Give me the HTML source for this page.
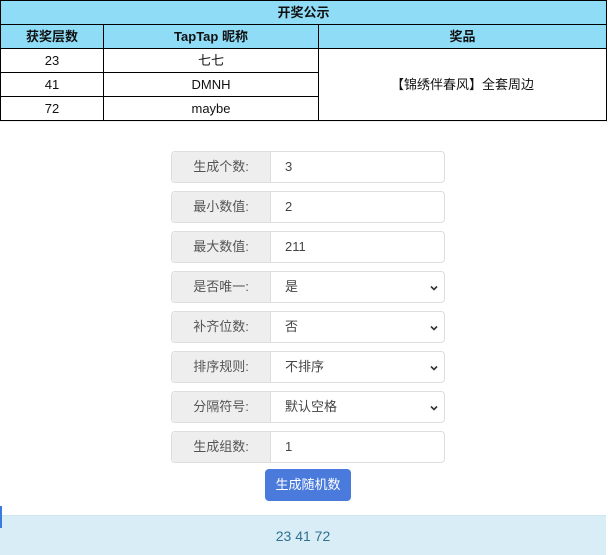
<!DOCTYPE html>
<html><head><meta charset="utf-8"><style>
*{box-sizing:border-box;margin:0;padding:0}
body{width:608px;height:555px;background:#fff;font-family:"Liberation Sans","Noto Sans CJK SC",sans-serif;position:relative;overflow:hidden}
table{position:absolute;left:0;top:0;width:607px;border-collapse:collapse;font-size:13px;color:#111}
td,th{border:1px solid #000;text-align:center;height:24px;padding:0;line-height:1}
th{background:#8fdcf7;font-weight:bold}
.g{position:absolute;left:171px;width:274px;height:32px;border:1px solid #ddd;border-radius:4px;display:flex;font-size:13px;color:#555;line-height:1}
.g .l{width:99px;background:#eee;border-right:1px solid #ddd;display:flex;align-items:center;justify-content:center;border-radius:4px 0 0 4px;padding-bottom:2px}
.g .v{flex:1;display:flex;align-items:center;padding-left:14px;position:relative;color:#444;padding-bottom:2px}
.ar{position:absolute;right:6px;top:12px;width:8px;height:8px}
.btn{position:absolute;left:265px;top:469px;width:86px;height:32px;background:#4a7bdc;border-radius:4px;color:#fff;font-size:13px;display:flex;align-items:center;justify-content:center;line-height:1;padding-bottom:2px}
.res{position:absolute;left:0;top:515px;width:606px;height:40px;background:#d9edf7;color:#31708f;font-size:14px;display:flex;align-items:center;justify-content:center;border-top:1px solid #cfe6f2}
</style></head><body>
<table>
<tr><th colspan="3">开奖公示</th></tr>
<tr><th style="width:103px">获奖层数</th><th style="width:215px">TapTap 昵称</th><th>奖品</th></tr>
<tr><td>23</td><td>七七</td><td rowspan="3">【锦绣伴春风】全套周边</td></tr>
<tr><td>41</td><td>DMNH</td></tr>
<tr><td>72</td><td>maybe</td></tr>
</table>
<div style="position:absolute;left:0;top:121px;width:608px;height:1px;background:#eee"></div>
<div class="g" style="top:151px"><div class="l">生成个数:</div><div class="v">3</div></div>
<div class="g" style="top:191px"><div class="l">最小数值:</div><div class="v">2</div></div>
<div class="g" style="top:231px"><div class="l">最大数值:</div><div class="v">211</div></div>
<div class="g" style="top:271px"><div class="l">是否唯一:</div><div class="v">是<svg class="ar" viewBox="0 0 8 8"><path d="M1 2.5L4 5.5L7 2.5" stroke="#333" stroke-width="1.6" fill="none"/></svg></div></div>
<div class="g" style="top:311px"><div class="l">补齐位数:</div><div class="v">否<svg class="ar" viewBox="0 0 8 8"><path d="M1 2.5L4 5.5L7 2.5" stroke="#333" stroke-width="1.6" fill="none"/></svg></div></div>
<div class="g" style="top:351px"><div class="l">排序规则:</div><div class="v">不排序<svg class="ar" viewBox="0 0 8 8"><path d="M1 2.5L4 5.5L7 2.5" stroke="#333" stroke-width="1.6" fill="none"/></svg></div></div>
<div class="g" style="top:391px"><div class="l">分隔符号:</div><div class="v">默认空格<svg class="ar" viewBox="0 0 8 8"><path d="M1 2.5L4 5.5L7 2.5" stroke="#333" stroke-width="1.6" fill="none"/></svg></div></div>
<div class="g" style="top:431px"><div class="l">生成组数:</div><div class="v">1</div></div>
<div class="btn">生成随机数</div>
<div class="res">23 41 72</div>
<div style="position:absolute;left:0;top:506px;width:2px;height:22px;background:#3b7be0"></div>
</body></html>
